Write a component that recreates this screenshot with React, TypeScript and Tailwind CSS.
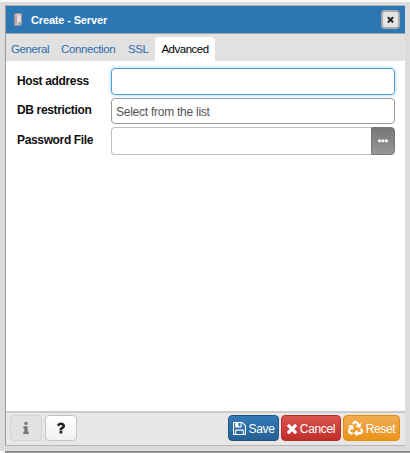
import React from "react";
import { FaRecycle } from "react-icons/fa";

const paths = {
  save: "M384 1536h768v-384h-768v384zM1280 1536h128v-896q0-14-10-38.5t-20-34.5l-281-281q-10-10-34-20t-39-10v416q0 40-28 68t-68 28h-576q-40 0-68-28t-28-68v-416h-128v1280h128v-416q0-40 28-68t68-28h832q40 0 68 28t28 68v416zM896 608v-320q0-13-9.5-22.5t-22.5-9.5h-192q-13 0-22.5 9.5t-9.5 22.5v320q0 13 9.5 22.5t22.5 9.5h192q13 0 22.5-9.5t9.5-22.5zM1536 640v928q0 40-28 68t-68 28h-1344q-40 0-68-28t-28-68v-1344q0-40 28-68t68-28h928q40 0 88 20t76 48l280 280q28 28 48 76t20 88z",
  times: "M1298 1322q0 40-28 68l-136 136q-28 28-68 28t-68-28l-294-294-294 294q-28 28-68 28t-68-28l-136-136q-28-28-28-68t28-68l294-294-294-294q-28-28-28-68t28-68l136-136q28-28 68-28t68 28l294 294 294-294q28-28 68-28t68 28l136 136q28 28 28 68t-28 68l-294 294 294 294q28 28 28 68z",
  info: "M640 1344v128q0 26-19 45t-45 19h-512q-26 0-45-19t-19-45v-128q0-26 19-45t45-19h64v-384h-64q-26 0-45-19t-19-45v-128q0-26 19-45t45-19h384q26 0 45 19t19 45v576h64q26 0 45 19t19 45zM512 192v192q0 26-19 45t-45 19h-256q-26 0-45-19t-19-45v-192q0-26 19-45t45-19h256q26 0 45 19t19 45z",
  question: "M704 1256v240q0 16-12 28t-28 12h-240q-16 0-28-12t-12-28v-240q0-16 12-28t28-12h240q16 0 28 12t12 28zM1020 656q0 54-15.5 101t-35 76.5-55 59.5-57.5 43.5-61 35.5q-41 23-68.5 65t-27.5 67q0 17-12 32.5t-28 15.5h-240q-15 0-25.5-18.5t-10.5-37.5v-45q0-83 65-156.5t143-108.5q59-27 84-56t25-76q0-42-46.5-74t-107.5-32q-65 0-108 29-35 25-107 115-13 16-31 16-12 0-25-8l-164-125q-13-10-15.5-25t5.5-28q160-266 464-266 80 0 161 31t146 83 106 127.5 41 158.5z",
};

function Icon({ d, box, className }: { d: string; box: string; className: string }) {
  return (
    <svg viewBox={box} className={className} fill="currentColor">
      <path d={d} />
    </svg>
  );
}

function ServerIcon() {
  return (
    <svg width="8" height="13" viewBox="0 0 8 13">
      <path d="M0.5 1.5 2 .5h5.5v11L6 12.5H.5z" fill="#d6c8cc" stroke="#a78c96" strokeWidth="1" />
      <path d="M1 2.5h2v9H1z" fill="#b9a3aa" />
      <path d="M3 3h3.5v8H3z" fill="#e6dcdf" />
      <path d="M4.5 9.5h2v2h-2z" fill="#3fa9a0" />
    </svg>
  );
}

function Row({ label, className, children }: { label: string; className: string; children: React.ReactNode }) {
  return (
    <div className={`flex items-stretch ${className}`}>
      <label className="flex w-[94px] shrink-0 items-center pb-[2px] text-[12px] font-bold tracking-[-0.35px] whitespace-nowrap text-[#111]">
        <span>{label}</span>
      </label>
      {children}
    </div>
  );
}

export default function App() {
  return (
    <div className="flex h-[453px] w-[410px] flex-col overflow-hidden bg-[#dcdcdc] font-['Liberation_Sans',Arial,sans-serif] text-[12px]">
      <div className="h-[2px] shrink-0 bg-[#fafafa]" />
      <div className="mt-[3px] ml-[5px] flex h-[441px] w-[400px] shrink-0 flex-col border-t border-b border-l border-t-[#b0b0b0] border-b-[#b5b5b5] border-l-[#999] bg-white">
        <header className="flex h-[28px] shrink-0 items-center border-b border-[#a5a5a5] bg-[#2c76b4] pr-[5px] pl-[8px] text-white">
          <ServerIcon />
          <h1 className="ml-[9px] flex-1 pt-px text-[11px] font-bold tracking-[-0.15px]">Create - Server</h1>
          <button className="flex h-[19px] w-[19px] items-center justify-center rounded-[4px] border-2 border-[#aaa] bg-[#e4e4e4] text-[#222]">
            <Icon d={paths.times} box="110 238 1188 1316" className="h-[7px] w-[7px]" />
          </button>
        </header>
        <nav className="flex h-[27px] shrink-0 items-end bg-[#e1e1e1] pl-[5px] text-[11.5px] tracking-[-0.4px] text-[#2a6cab]">
          <span className="flex h-[24px] w-[50px] items-center pt-[2px]">General</span>
          <span className="flex h-[24px] w-[67px] items-center pt-[2px]">Connection</span>
          <span className="flex h-[24px] w-[27px] items-center pt-[2px]">SSL</span>
          <span className="flex h-[24px] w-[60px] items-center justify-center rounded-t-[4px] bg-white pt-[2px] tracking-[-0.5px] text-black">Advanced</span>
        </nav>
        <main className="flex flex-1 flex-col pt-[7px] pr-[10px] pl-[11px]">
          <Row label="Host address" className="h-[27px]">
            <div className="flex-1 rounded-[4px] border border-[#499de4] shadow-[0_0_4px_#a8d5fa]" />
          </Row>
          <Row label="DB restriction" className="mt-[3px] h-[26px]">
            <div className="flex flex-1 items-center rounded-[4px] border border-[#999] pt-px pl-1 text-[12px] tracking-[-0.25px] text-[#555]">Select from the list</div>
          </Row>
          <Row label="Password File" className="mt-[3px] h-[28px]">
            <div className="flex-1 rounded-l-[4px] border border-r-0 border-[#c0c0c0]" />
            <button className="flex w-[24px] items-center justify-center rounded-r-[4px] border border-[#777] bg-linear-to-b from-[#777] to-[#969696]">
              <svg width="10" height="4" viewBox="0 0 10 4" fill="white">
                <rect x="0.2" y="0.6" width="2.7" height="2.7" rx="0.7" />
                <rect x="3.6" y="0.6" width="2.7" height="2.7" rx="0.7" />
                <rect x="7" y="0.6" width="2.7" height="2.7" rx="0.7" />
              </svg>
            </button>
          </Row>
        </main>
        <footer className="flex h-[34px] shrink-0 items-start border-t-2 border-[#cbcbcb] bg-[#e7e7e7] pt-[2px] pr-[5px] pl-[4px] text-[12px] tracking-[-0.35px] text-white">
          <button className="flex h-[26px] w-[32px] items-center justify-center rounded-[4px] border border-[#d2d2d2] bg-[#e2e2e2] text-[#777]">
            <Icon d={paths.info} box="0 128 640 1408" className="h-[12px] w-[6px]" />
          </button>
          <button className="ml-[3px] flex h-[26px] w-[32px] items-center justify-center rounded-[4px] border border-[#c5c5c5] bg-linear-to-b from-white to-[#f1f1f1] text-[#222]">
            <Icon d={paths.question} box="90 256 930 1280" className="h-[12px] w-[8px]" />
          </button>
          <div className="flex-1" />
          <button className="flex h-[26px] w-[51px] items-center justify-center gap-[3px] rounded-[4px] border border-[#245580] bg-linear-to-b from-[#337ab7] to-[#265f96]">
            <Icon d={paths.save} box="0 128 1536 1536" className="h-[13px] w-[13px]" />
            <span className="pt-px">Save</span>
          </button>
          <button className="ml-[2px] flex h-[26px] w-[60px] items-center justify-center gap-[3px] rounded-[4px] border border-[#b92c28] bg-linear-to-b from-[#d9534f] to-[#c12e2a]">
            <Icon d={paths.times} box="110 238 1188 1316" className="h-[11px] w-[10px]" />
            <span className="pt-px">Cancel</span>
          </button>
          <button className="ml-[2px] flex h-[26px] w-[57px] items-center justify-center gap-[3px] rounded-[4px] border border-[#e38d13] bg-linear-to-b from-[#f0ad4e] to-[#eb9316]">
            <FaRecycle className="h-[15px] w-[15px] stroke-white" strokeWidth={16} />
            <span className="pt-px">Reset</span>
          </button>
        </footer>
      </div>
      <div className="mt-[5px] h-[2px] shrink-0 bg-[#fafafa] pl-[5px]">
        <div className="h-full bg-linear-to-b from-[#777] to-[#aaa]" />
      </div>
    </div>
  );
}
